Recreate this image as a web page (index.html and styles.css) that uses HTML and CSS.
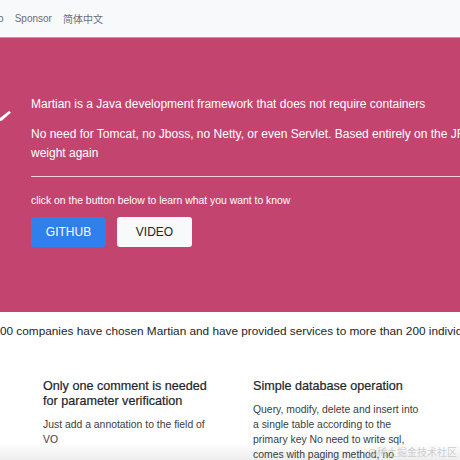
FILE: index.html
```html
<!DOCTYPE html>
<html>
<head>
<meta charset="utf-8">
<link rel="stylesheet" href="styles.css">
</head>
<body>
<div class="page">
  <nav class="nav">
    <a class="nav-item first">Demo</a>
    <a class="nav-item">Sponsor</a>
    <a class="nav-item">简体中文</a>
  </nav>
  <section class="hero">
    <svg class="hero-mark" width="14" height="14" viewBox="0 0 14 14"><polygon points="0,10 9,3 11,4.5 2,12.5 0,13" fill="#fff"/></svg>
    <div class="hero-inner">
      <p class="lead">Martian is a Java development framework that does not require containers</p>
      <p class="lead">No need for Tomcat, no Jboss, no Netty, or even Servlet. Based entirely on the JRE, light weight again</p>
      <hr class="rule">
      <p class="hint">click on the button below to learn what you want to know</p>
      <div class="buttons">
        <a class="btn btn-primary">GITHUB</a>
        <a class="btn btn-light">VIDEO</a>
      </div>
    </div>
  </section>
  <p class="stats">More than 100 companies have chosen Martian and have provided services to more than 200 individuals</p>
  <section class="features">
    <div class="feature">
      <h3 class="feature-title">Only one comment is needed for parameter verification</h3>
      <p class="feature-text">Just add a annotation to the field of VO</p>
    </div>
    <div class="feature">
      <h3 class="feature-title">Simple database operation</h3>
      <p class="feature-text">Query, modify, delete and insert into a single table according to the primary key No need to write sql, comes with paging method, no</p>
    </div>
  </section>
</div>
<div class="shade"></div>
<div class="watermark">@稀土掘金技术社区</div>
</body>
</html>
```
FILE: styles.css
```css
html, body {
  margin: 0;
  padding: 0;
  overflow: hidden;
  width: 460px;
  height: 460px;
  background: #fff;
}
body {
  font-family: "Liberation Sans", "Noto Sans CJK SC", sans-serif;
  position: relative;
}
.page {
  width: 460px;
}
.nav {
  height: 37px;
  background: #f8f9fa;
  display: flex;
  align-items: center;
  gap: 11px;
  margin-left: -23px;
  border-bottom: 1px solid #d88aa5;
}
.nav-item {
  font-size: 10px;
  color: #6a6e75;
  white-space: nowrap;
}
.hero {
  position: relative;
  background: #c3456f;
  padding: 57px 0 65px 31px;
  color: #fff;
}
.hero-mark {
  position: absolute;
  left: 0;
  top: 70px;
}
.hero-inner {
  width: 480px;
}
.lead {
  margin: 0 0 11px;
  font-size: 12px;
  line-height: 19px;
}
.rule {
  margin: 13px 0 16px;
  border: 0;
  border-top: 1px solid rgba(255,255,255,0.75);
}
.hint {
  margin: 0 0 9px;
  font-size: 10.4px;
  line-height: 15px;
}
.buttons {
  display: flex;
  gap: 11px;
}
.btn {
  width: 75px;
  height: 30px;
  display: flex;
  align-items: center;
  justify-content: center;
  font-size: 12px;
  border-radius: 3px;
}
.btn-primary {
  background: #2f80ed;
  color: #fff;
}
.btn-light {
  background: #f8f9fa;
  color: #212529;
}
.stats {
  margin: 10px 0 0 -63px;
  font-size: 11.8px;
  line-height: 19px;
  color: #212529;
  white-space: nowrap;
}
.features {
  display: flex;
  gap: 42px;
  padding: 38px 0 0 43px;
}
.feature {
  width: 168px;
  flex: none;
}
.feature-title {
  margin: 0 0 8px;
  font-size: 12.6px;
  line-height: 15px;
  font-weight: normal;
  color: #212529;
  -webkit-text-stroke: 0.2px #212529;
}
.feature-text {
  margin: 0;
  font-size: 10.4px;
  line-height: 15px;
  color: #3a3d41;
}
.shade {
  position: absolute;
  left: 0;
  right: 0;
  bottom: 0;
  height: 18px;
  background: linear-gradient(to bottom, rgba(0,0,0,0), rgba(0,0,0,0.07));
}
.watermark {
  position: absolute;
  right: 3px;
  bottom: 1px;
  font-family: "Noto Sans CJK SC", sans-serif;
  font-size: 10px;
  color: rgba(200,200,200,0.9);
}
```
